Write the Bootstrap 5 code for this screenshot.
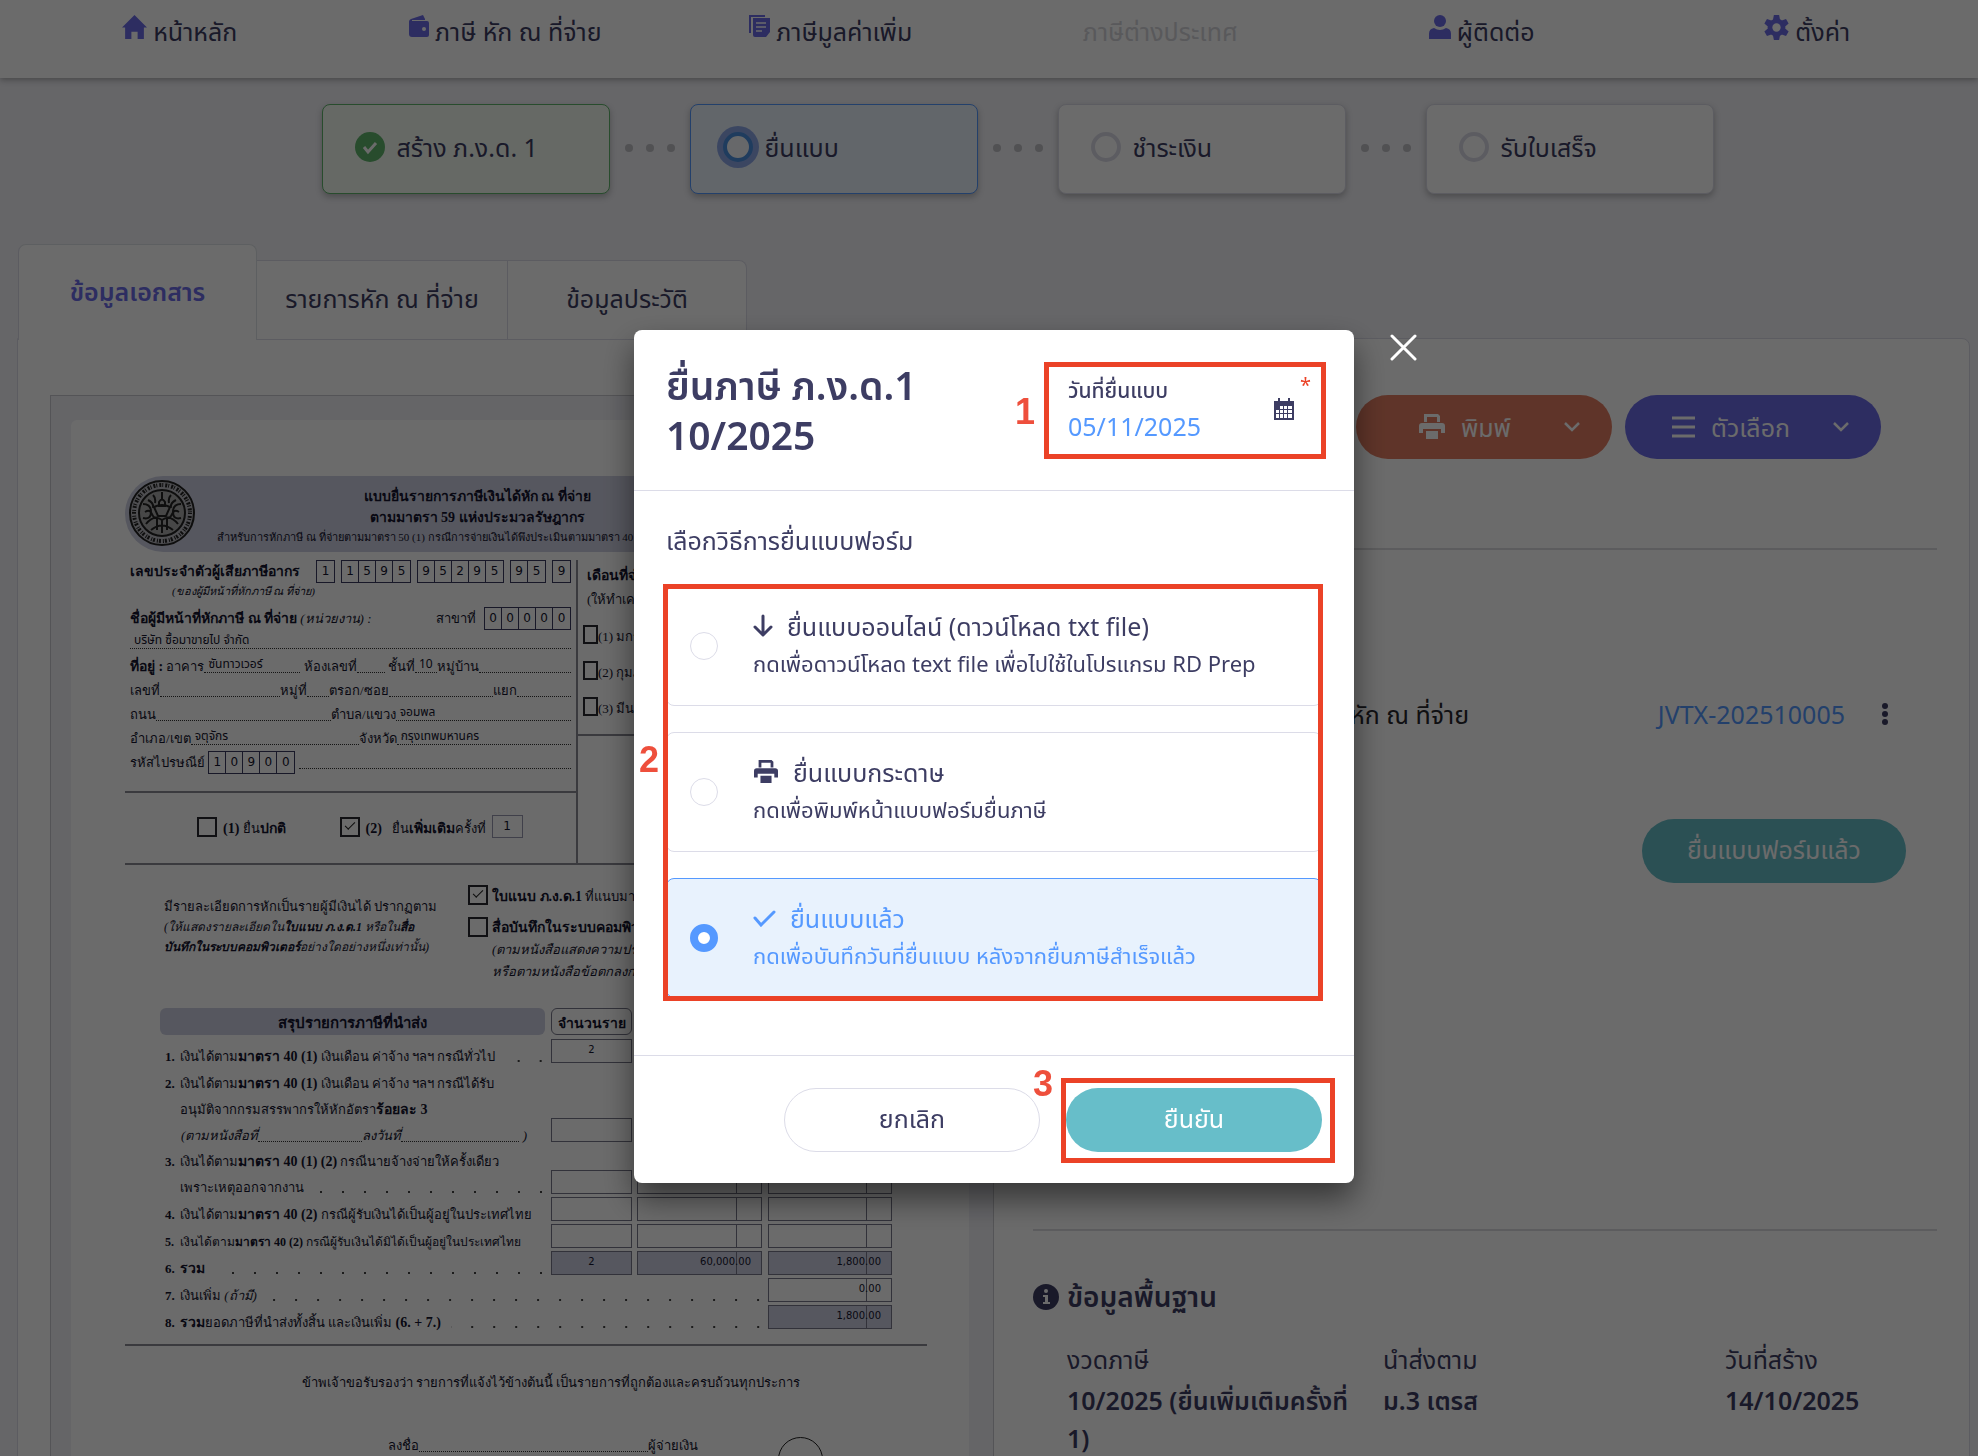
<!DOCTYPE html>
<html lang="th">
<head>
<meta charset="utf-8">
<meta name="viewport" content="width=device-width, initial-scale=1">
<title>ยื่นภาษี ภ.ง.ด.1</title>
<link href="https://cdn.jsdelivr.net/npm/bootstrap@5.3.0/dist/css/bootstrap.min.css" rel="stylesheet">
<style>
  :root { --ink:#3d3d63; --violet:#6b6be8; --blue:#5599ff; --teal:#67bec9; --rule:#dcdce8; --alert:#eb4227; --form-rule:#8a8a95; --form-fill:#ced0e2; }
  body { background:#f2f2f7; color:var(--ink); font-family:"Noto Sans","Noto Sans Thai",sans-serif; font-size:25px; line-height:38px; }
  a { color:inherit; text-decoration:none; }
  svg { display:block; flex:none; }
  .screen { height:100vh; overflow:hidden; }
  .topnav { height:78px; background:#fff; box-shadow:0 2px 6px rgba(0,0,0,.3); padding:12px 8px 0 17px; }
  .topnav .nav-link { padding:0; color:var(--ink); display:flex; justify-content:center; gap:6px; }
  .topnav .nav-link.disabled { color:#d4d4da; padding-left:8px; }
  .topnav svg { color:var(--violet); margin-top:3px; }
  .steps { padding:26px 0 0 57px; height:166px; }
  .step { width:288px; height:90px; padding:0 32px 4px; gap:12px; background:#fff; border:1px solid var(--rule); border-radius:8px; box-shadow:0 3px 6px rgba(0,0,0,.25); }
  .step-done { background:#f3f9f1; border-color:#5fb56b; }
  .step-now { background:#eaf2fd; border-color:var(--blue); }
  .ring { width:30px; height:30px; border:4px solid var(--rule); border-radius:50%; }
  .step-now .ring { border-color:#4a8fe0; box-shadow:0 0 0 6px #8da8e8; background:#f5f8fd; }
  .dots { width:80px; height:88px; gap:13px; }
  .dots i { width:8px; height:8px; border-radius:50%; background:#c0c0c6; }
  .doc-tabs { padding-left:18px; border:0; height:94px; align-items:flex-end; }
  .doc-tabs .nav-link { height:80px; background:#fff; border:1px solid var(--rule); border-left:0; border-radius:0; color:var(--ink); padding:0 0 4px; width:239px; display:flex; align-items:center; justify-content:center; }
  .doc-tabs .mid .nav-link { width:251px; }
  .doc-tabs li:last-child .nav-link { border-top-right-radius:8px; }
  .doc-tabs .nav-link.active { height:96px; border-left:1px solid var(--rule); border-radius:8px 8px 0 0; color:var(--violet); font-weight:600; border-bottom:0; }
  .panel { margin:0 8px 0 17px; background:#fff; border:1px solid var(--rule); border-radius:0 8px 8px 8px; padding:56px 32px 0; }
  .viewer { width:944px; flex:none; background:#f0f0f6; border:1px solid #c9c9cf; padding:24px 24px 0 20px; height:1100px; overflow:hidden; }
  .paper { background:#fff; border-radius:6px; height:1100px; padding:56px 42px 0 54px; color:#14142e; }
  .side { flex:1; padding-left:39px; min-width:0; }
  .pill { height:64px; border-radius:32px; width:256px; border:0; font-size:25px; line-height:38px; display:flex; align-items:center; justify-content:center; color:#fff; padding:0 0 4px; }
  .pill-print { background:#e27d62; } .pill-menu { background:var(--violet); } .pill-done { background:var(--teal); width:264px; }
  .split { justify-content:flex-end; padding:0 31px 0 0; }
  .split svg:last-child { margin-left:52px; }
  .pill-menu svg:last-child { margin-left:42px; }
  .side hr { border:0; border-top:2px solid #dcdcdf; margin:0; opacity:1; }
  .actions { padding-right:56px; gap:13px; height:153px; }
  .journal { height:269px; padding:145px 44px 0 0; color:#26262c; }
  .journal span { width:436px; text-align:right; white-space:nowrap; }
  .journal a { color:var(--blue); }
  .filed { height:410px; padding-right:31px; }
  .info-title { font-weight:600; font-size:28px; padding-top:49px; gap:8px; }
  .facts { padding:26px 0 0 34px; }
  .facts dt { font-weight:400; line-height:38px; }
  .facts dd { font-weight:600; line-height:38px; margin:3px 0 0; }
  .fact-a { width:316px; } .fact-b { width:342px; }
  .fact-a dd { width:308px; }

  .form-doc { font-family:"Liberation Serif",serif; font-size:13px; line-height:24px; white-space:nowrap; }
  .form-doc b { font-size:14px; }
  .band { height:76px; background:var(--form-fill); border-radius:38px 0 0 38px; padding:4px; }
  .band-text { width:520px; margin-left:22px; font-size:11px; line-height:18px; padding-top:6px; }
  .band-text b { line-height:21px; display:block; text-align:center; }
  .digits { display:flex; gap:6px; font:12px/20px "DejaVu Sans",sans-serif; height:23px; }
  .digits span { display:flex; border:1px solid #39395f; }
  .digits i { width:17px; text-align:center; font-style:normal; border-right:1px solid #39395f; }
  .digits i:last-child { border:0; }
  .fill { flex:1; border-bottom:1px dotted #333; height:18px; font:12px/17px "Noto Sans","Noto Sans Thai",sans-serif; padding-left:4px; }
  .w1 { flex:none; width:96px; } .w2 { flex:none; width:28px; } .w3 { flex:none; width:120px; } .w4 { flex:none; width:22px; } .w5 { flex:none; width:104px; }
  .w6 { flex:none; width:175px; } .w7 { flex:none; width:168px; }
  .ln { display:flex; height:24px; }
  .left-col { width:453px; border-right:2px solid var(--form-rule); height:303px; flex:none; }
  .fields { padding:0 5px; height:231px; }
  .tax-it { line-height:14px; height:23px; font-size:11px; padding-left:42px; }
  .kind { border-top:2px solid var(--form-rule); height:72px; padding:24px 0 0 72px; gap:6px; }
  .right-col { flex:1; height:176px; border-bottom:2px solid var(--form-rule); padding:4px 5px 0; }
  .right-head { padding-left:4px; }
  .months { margin-top:13px; gap:12px; }
  .tick { appearance:none; width:20px; height:20px; border:2px solid #26262e; margin:0; flex:none; background:#fff; position:relative; border-radius:0; }
  .tick:checked::after { content:""; position:absolute; left:3px; top:3px; width:10px; height:5px; border-left:1px solid #222; border-bottom:1px solid #222; transform:rotate(-45deg); }
  .tick-s { width:15px; height:19px; }
  .round-no { width:31px; height:23px; border:1px solid #9a9ab0; font:12px/20px "DejaVu Sans",sans-serif; text-align:center; margin-top:-2px; }
  .attach { border-top:2px solid var(--form-rule); padding:20px 0 0 39px; height:145px; }
  .attach-note { width:304px; line-height:20px; padding-top:12px; }
  .attach-note em, .attach-note em b { font-size:12px; }
  .attach-how div + div { line-height:22px; }
  .sum { margin:0 0 0 35px; border-collapse:collapse; table-layout:fixed; width:738px; }
  .sum th, .sum td { padding:0; vertical-align:bottom; line-height:24px; }
  .cap-main { background:var(--form-fill); border-radius:6px; height:27px; line-height:31px; text-align:center; margin-right:6px; font-size:15px; }
  .cap-box { border:1px solid #77778a; border-radius:6px; height:27px; line-height:29px; text-align:center; margin-right:5px; font-size:14px; }
  .sum tbody td { height:27px; }
  .sum .t2 td { height:79px; } .sum .t3 td { height:52px; } .sum .t1 td { height:28px; }
  .cellbox { height:24px; border:1px solid #77778a; font:10px/20px "DejaVu Sans",sans-serif; text-align:right; padding-right:10px; margin-right:6px; background:linear-gradient(#77778a,#77778a) right 24px top/1px 100% no-repeat; }
  .cellbox.qty { text-align:center; padding:0; margin-right:5px; background-image:none; }
  .cellbox.total { background-color:var(--form-fill); }
  .row-label { display:flex; padding-left:5px; margin-bottom:-6px; }
  .row-label span.in { padding-left:15px; }
  .narrow, .narrow b { font-size:12px; }
  .dotfill { flex:1; margin:0 6px 0 10px; background:radial-gradient(circle at 18px 16px,#444 0,#444 1px,transparent 1px) right 0 top/22px 24px repeat-x; height:24px; }
  .no { width:15px; flex:none; font-weight:700; }
  .certify { border-top:2px solid var(--form-rule); margin-top:15px; padding:25px 0 0 50px; text-align:center; }
  .sign { margin:39px 0 0 263px; height:24px; align-items:flex-start; }
  .stamp { width:45px; height:45px; border:1px solid #222; border-radius:50%; margin:3px 0 0 80px; flex:none; }

  .modal { padding-left:10px; }
  .modal-backdrop.show { opacity:.58; }
  .modal-dialog { max-width:720px; margin-top:330px; }
  .modal-content { border:0; border-radius:8px; box-shadow:0 16px 32px rgba(0,0,0,.5); color:var(--ink); }
  .modal-header { padding:30px 32px 0; height:161px; border-color:var(--rule); align-items:flex-start; }
  .modal-title { font-size:39px; line-height:50px; font-weight:600; }
  .datefield { width:256px; padding:12px 14px 0 2px; position:relative; }
  .datefield label { font-size:21px; line-height:36px; font-weight:500; display:block; }
  .datefield input { border:0; padding:0; width:180px; color:var(--blue); font-size:25px; line-height:36px; height:36px; display:block; background:none; }
  .calbtn { position:absolute; right:28px; top:38px; border:0; background:none; padding:0; color:var(--ink); }
  .star { position:absolute; right:11px; top:10px; color:var(--alert); font-size:20px; line-height:30px; }
  .frame { position:absolute; border:5px solid var(--alert); pointer-events:none; }
  .mark-no { position:absolute; color:#ee4f3c; font:700 36px/36px "Liberation Sans",sans-serif; }
  .modal-body { padding:30px 32px 0; height:564px; flex:none; }
  .choices { gap:26px; margin-top:27px; position:relative; }
  .choice { height:120px; border:1px solid var(--rule); border-radius:8px; padding:20px 25px 0 23px; cursor:pointer; }
  .choice input { appearance:none; width:28px; height:28px; border:1px solid var(--rule); border-radius:50%; margin:25px 35px 0 0; flex:none; background:#fff; }
  .choice input:checked { border:8px solid var(--blue); }
  .choice-name { gap:14px; }
  .choice small { font-size:22px; line-height:36px; display:block; }
  .choice.on { background:#e8f2fd; border-color:var(--blue); color:var(--blue); }
  .modal-footer { padding:32px 32px 31px; border-color:var(--rule); gap:26px; position:relative; }
  .modal-footer > * { margin:0; }
  .cancel { background:#fff; border:1px solid var(--rule); color:var(--ink); }
  .confirm { background:var(--teal); }
  .xbtn { position:absolute; right:-63px; top:4px; border:0; background:none; padding:0; }
</style>
<script src="https://cdn.jsdelivr.net/npm/bootstrap@5.3.0/dist/js/bootstrap.bundle.min.js"></script>
</head>
<body class="modal-open overflow-hidden">
<svg width="0" height="0" class="position-absolute">
  <symbol id="printer" viewBox="0 0 26 26"><path fill="currentColor" d="M5 0h14l2 2v6h-3V3H8v5H5zM3 9h20a3 3 0 0 1 3 3v7h-4v-4H4v4H0v-7a3 3 0 0 1 3-3zM7 17h12v8H7z"/></symbol>
</svg>
<div class="screen">
  <nav class="topnav">
    <ul class="nav nav-justified flex-nowrap">
      <li class="nav-item"><a class="nav-link" href="#"><svg width="25" height="25" viewBox="0 0 24 24" fill="currentColor"><path d="M12 0 0 12h3v11h6v-7h6v7h6V12h3z"/></svg>หน้าหลัก</a></li>
      <li class="nav-item"><a class="nav-link" href="#"><svg width="20" height="22" viewBox="0 0 20 22" fill="currentColor"><path d="M2 4 14 0l2 4v1H3v1h15a2 2 0 0 1 2 2v12a2 2 0 0 1-2 2H3a3 3 0 0 1-3-3V7a3 3 0 0 1 2-3zm13 8a2 2 0 1 0 0 4 2 2 0 0 0 0-4z"/></svg>ภาษี หัก ณ ที่จ่าย</a></li>
      <li class="nav-item"><a class="nav-link" href="#"><svg width="21" height="24" viewBox="0 0 21 24"><path d="M1 18V1h15" fill="none" stroke="currentColor" stroke-width="2"/><path d="M4 3h17v14l-4 5H6a2 2 0 0 1-2-2z" fill="currentColor"/><path d="M7 8h10M7 12h10M7 16h6" stroke="#fff" stroke-width="1.6"/></svg>ภาษีมูลค่าเพิ่ม</a></li>
      <li class="nav-item"><a class="nav-link disabled" aria-disabled="true">ภาษีต่างประเทศ</a></li>
      <li class="nav-item"><a class="nav-link" href="#"><svg width="22" height="25" viewBox="0 0 22 25" fill="currentColor"><circle cx="11" cy="6" r="6"/><path d="M0 24v-5a6 6 0 0 1 5-6q6 4 12 0a6 6 0 0 1 5 6v5z"/></svg>ผู้ติดต่อ</a></li>
      <li class="nav-item"><a class="nav-link" href="#"><svg width="25" height="25" viewBox="0 0 24 24"><g fill="currentColor"><circle cx="12" cy="12" r="8.5"/><path id="teeth" d="M9.500 0h5l1 5h-7zM9.500 24h5l1-5h-7z"/><use href="#teeth" transform="rotate(60 12 12)"/><use href="#teeth" transform="rotate(120 12 12)"/></g><circle cx="12" cy="12" r="4" fill="#fff"/></svg>ตั้งค่า</a></li>
    </ul>
  </nav>

  <div class="steps d-flex justify-content-center align-items-start">
    <div class="step step-done d-flex align-items-center"><svg width="30" height="30" viewBox="0 0 30 30"><circle cx="15" cy="15" r="15" fill="#5fb56b"/><path d="m9 15 4 5 8-9" fill="none" stroke="#fff" stroke-width="3"/></svg>สร้าง ภ.ง.ด. 1</div>
    <div class="dots d-flex justify-content-center align-items-center"><i></i><i></i><i></i></div>
    <div class="step step-now d-flex align-items-center"><span class="ring"></span>ยื่นแบบ</div>
    <div class="dots d-flex justify-content-center align-items-center"><i></i><i></i><i></i></div>
    <div class="step d-flex align-items-center"><span class="ring"></span>ชำระเงิน</div>
    <div class="dots d-flex justify-content-center align-items-center"><i></i><i></i><i></i></div>
    <div class="step d-flex align-items-center"><span class="ring"></span>รับใบเสร็จ</div>
  </div>

  <ul class="nav nav-tabs doc-tabs">
    <li class="nav-item"><a class="nav-link active" href="#">ข้อมูลเอกสาร</a></li>
    <li class="nav-item mid"><a class="nav-link" href="#">รายการหัก ณ ที่จ่าย</a></li>
    <li class="nav-item"><a class="nav-link" href="#">ข้อมูลประวัติ</a></li>
  </ul>

  <main class="panel d-flex">
    <section class="viewer">
      <div class="paper"><div class="form-doc">
        <div class="band d-flex">
          <svg width="66" height="66" viewBox="0 0 66 66" fill="none" stroke="#222"><circle cx="33" cy="33" r="32" fill="#bbbbc2" stroke-width="2"/><circle cx="33" cy="33" r="28" stroke-width="4" stroke-dasharray="1 2 2 1"/><circle cx="33" cy="33" r="23" fill="#aaa" stroke-width="2"/><path d="M33 12v8M30 22q3-5 6 0v4h-6zM25 27q8-4 16 0l-4 9h-8zM14 24q8 0 8 8t-8 6M52 24q-8 0-8 8t8 6M16 32q5-3 7 2t5 3M50 32q-5-3-7 2t-5 3M17 44q8-10 16-4 8-6 16 4M22 50q11-9 22 0M28 38v12M38 38v12M33 40v13M19 20q6 3 5 8M47 20q-6 3-5 8M24 15q3 3 2 8M42 15q-3 3-2 8" stroke-width="2"/></svg>
          <div class="band-text"><b>แบบยื่นรายการภาษีเงินได้หัก ณ ที่จ่าย</b><b>ตามมาตรา 59 แห่งประมวลรัษฎากร</b>สำหรับการหักภาษี ณ ที่จ่ายตามมาตรา 50 (1) กรณีการจ่ายเงินได้พึงประเมินตามมาตรา 40 (1) (2)</div>
        </div>
        <div class="d-flex pt-2">
          <div class="left-col">
            <div class="fields">
              <div class="ln justify-content-between"><b>เลขประจำตัวผู้เสียภาษีอากร</b><div class="digits"><span><i>1</i></span><span><i>1</i><i>5</i><i>9</i><i>5</i></span><span><i>9</i><i>5</i><i>2</i><i>9</i><i>5</i></span><span><i>9</i><i>5</i></span><span><i>9</i></span></div></div>
              <div class="tax-it"><em>(ของผู้มีหน้าที่หักภาษี ณ ที่จ่าย)</em></div>
              <div class="ln"><b>ชื่อผู้มีหน้าที่หักภาษี ณ ที่จ่าย</b>&nbsp;<em>(หน่วยงาน) :</em><span class="ms-auto me-2">สาขาที่</span><div class="digits"><span><i>0</i><i>0</i><i>0</i><i>0</i><i>0</i></span></div></div>
              <div class="ln"><span class="fill">บริษัท ซื้อมาขายไป จำกัด</span></div>
              <div class="ln"><b>ที่อยู่ :</b>&nbsp;อาคาร<span class="fill w1">ซันทาวเวอร์</span>&nbsp;ห้องเลขที่<span class="fill w2"></span>&nbsp;ชั้นที่<span class="fill w4">10</span>หมู่บ้าน<span class="fill"></span></div>
              <div class="ln">เลขที่<span class="fill w3"></span>หมู่ที่<span class="fill w4"></span>ตรอก/ซอย<span class="fill w5"></span>แยก<span class="fill"></span></div>
              <div class="ln">ถนน<span class="fill w6"></span>ตำบล/แขวง<span class="fill">จอมพล</span></div>
              <div class="ln">อำเภอ/เขต<span class="fill w7">จตุจักร</span>จังหวัด<span class="fill">กรุงเทพมหานคร</span></div>
              <div class="ln">รหัสไปรษณีย์&nbsp;<div class="digits"><span><i>1</i><i>0</i><i>9</i><i>0</i><i>0</i></span></div>&nbsp;<span class="fill"></span></div>
            </div>
            <div class="kind d-flex">
              <input class="tick" type="checkbox" id="k1"><label for="k1"><b>(1)</b> ยื่น<b>ปกติ</b></label>
              <input class="tick ms-5" type="checkbox" id="k2" checked><label for="k2"><b>(2)</b> &nbsp; ยื่น<b>เพิ่มเติม</b>ครั้งที่</label>
              <span class="round-no">1</span>
            </div>
          </div>
          <div class="right-col">
            <div class="right-head"><b>เดือนที่จ่ายเงินได้พึงประเมิน</b><div>(ให้ทำเครื่องหมาย)</div></div>
            <div class="months d-flex flex-column">
              <div class="d-flex"><input class="tick tick-s" type="checkbox" id="m1"><label for="m1">(1) มกราคม</label></div>
              <div class="d-flex"><input class="tick tick-s" type="checkbox" id="m2"><label for="m2">(2) กุมภาพันธ์</label></div>
              <div class="d-flex"><input class="tick tick-s" type="checkbox" id="m3"><label for="m3">(3) มีนาคม</label></div>
            </div>
          </div>
        </div>
        <div class="attach d-flex">
          <div class="attach-note">มีรายละเอียดการหักเป็นรายผู้มีเงินได้ ปรากฏตาม<br><em>(ให้แสดงรายละเอียดใน<b>ใบแนบ ภ.ง.ด.1</b> หรือใน<b>สื่อ</b><br><b>บันทึกในระบบคอมพิวเตอร์</b>อย่างใดอย่างหนึ่งเท่านั้น)</em></div>
          <div class="attach-how">
            <div class="d-flex gap-1 mb-2"><input class="tick" type="checkbox" id="a1" checked><label for="a1"><b>ใบแนบ ภ.ง.ด.1</b> ที่แนบมาพร้อมนี้</label></div>
            <div class="d-flex gap-1"><input class="tick" type="checkbox" id="a2"><label for="a2"><b>สื่อบันทึกในระบบคอมพิวเตอร์</b></label></div>
            <div class="ps-4"><em>(ตามหนังสือแสดงความประสงค์ฯ</em></div><div class="ps-4"><em>หรือตามหนังสือข้อตกลงการใช้งานฯ</em></div>
          </div>
        </div>
        <table class="sum">
          <colgroup><col style="width:391px"><col style="width:86px"><col style="width:131px"><col style="width:130px"></colgroup>
          <thead><tr><th><div class="cap-main">สรุปรายการภาษีที่นำส่ง</div></th><th><div class="cap-box">จำนวนราย</div></th><th><div class="cap-box">เงินได้ทั้งสิ้น</div></th><th><div class="cap-box">ภาษีที่นำส่งทั้งสิ้น</div></th></tr></thead>
          <tbody>
            <tr class="t1"><td><div class="row-label"><span class="no">1.</span>เงินได้ตาม<b>มาตรา 40 (1)</b>&nbsp;เงินเดือน ค่าจ้าง ฯลฯ กรณีทั่วไป<span class="dotfill"></span></div></td><td><div class="cellbox qty">2</div></td><td><div class="cellbox">60,000.00</div></td><td><div class="cellbox">1,800.00</div></td></tr>
            <tr class="t2"><td><div class="row-label"><span class="no">2.</span>เงินได้ตาม<b>มาตรา 40 (1)</b>&nbsp;เงินเดือน ค่าจ้าง ฯลฯ กรณีได้รับ</div><div class="row-label pt-1 mt-1"><span class="in">อนุมัติจากกรมสรรพากรให้หักอัตรา<b>ร้อยละ 3</b></span></div><div class="row-label pt-1 mt-1"><em class="ps-3">(ตามหนังสือที่</em><span class="fill w5"></span><em>ลงวันที่</em><span class="fill me-1"></span><em class="me-4">)</em></div></td><td><div class="cellbox qty"></div></td><td><div class="cellbox"></div></td><td><div class="cellbox"></div></td></tr>
            <tr class="t3"><td><div class="row-label"><span class="no">3.</span>เงินได้ตาม<b>มาตรา 40 (1) (2)</b>&nbsp;กรณีนายจ้างจ่ายให้ครั้งเดียว</div><div class="row-label pt-1 mt-1"><span class="in">เพราะเหตุออกจากงาน</span><span class="dotfill"></span></div></td><td><div class="cellbox qty"></div></td><td><div class="cellbox"></div></td><td><div class="cellbox"></div></td></tr>
            <tr><td><div class="row-label"><span class="no">4.</span>เงินได้ตาม<b>มาตรา 40 (2)</b>&nbsp;กรณีผู้รับเงินได้เป็นผู้อยู่ในประเทศไทย</div></td><td><div class="cellbox qty"></div></td><td><div class="cellbox"></div></td><td><div class="cellbox"></div></td></tr>
            <tr><td><div class="row-label narrow"><span class="no">5.</span>เงินได้ตาม<b>มาตรา 40 (2)</b>&nbsp;กรณีผู้รับเงินได้มิได้เป็นผู้อยู่ในประเทศไทย</div></td><td><div class="cellbox qty"></div></td><td><div class="cellbox"></div></td><td><div class="cellbox"></div></td></tr>
            <tr><td><div class="row-label"><span class="no">6.</span><b>รวม</b><span class="dotfill"></span></div></td><td><div class="cellbox qty total">2</div></td><td><div class="cellbox total">60,000.00</div></td><td><div class="cellbox total">1,800.00</div></td></tr>
            <tr><td colspan="3"><div class="row-label"><span class="no">7.</span>เงินเพิ่ม&nbsp;<em>(ถ้ามี)</em><span class="dotfill"></span></div></td><td><div class="cellbox">0.00</div></td></tr>
            <tr><td colspan="3"><div class="row-label"><span class="no">8.</span><b>รวม</b>ยอดภาษีที่นำส่งทั้งสิ้น และเงินเพิ่ม&nbsp;<b>(6. + 7.)</b><span class="dotfill"></span></div></td><td><div class="cellbox total">1,800.00</div></td></tr>
          </tbody>
        </table>
        <div class="certify">ข้าพเจ้าขอรับรองว่า รายการที่แจ้งไว้ข้างต้นนี้ เป็นรายการที่ถูกต้องและครบถ้วนทุกประการ</div>
        <div class="sign d-flex"><span>ลงชื่อ</span><span class="fill"></span><span>ผู้จ่ายเงิน</span><span class="stamp"></span><span class="w5"></span></div>
      </div></div>
    </section>

    <section class="side">
      <div class="actions d-flex justify-content-end">
        <button type="button" class="pill pill-print split"><svg width="26" height="26" class="me-3"><use href="#printer"/></svg>พิมพ์<svg width="18" height="12" viewBox="0 0 18 12"><path d="m2 2 7 7 7-7" fill="none" stroke="#fff" stroke-width="2.500"/></svg></button>
        <button type="button" class="pill pill-menu split"><svg width="23" height="22" viewBox="0 0 23 22" class="me-3"><path d="M0 2h23M0 11h23M0 20h23" stroke="#fff" stroke-width="3"/></svg>ตัวเลือก<svg width="18" height="12" viewBox="0 0 18 12"><path d="m2 2 7 7 7-7" fill="none" stroke="#fff" stroke-width="2.500"/></svg></button>
      </div>
      <hr>
      <div class="journal d-flex align-items-start">
        <span>บันทึกรายการยื่นแบบภาษีหัก ณ ที่จ่าย</span>
        <a href="#" class="ms-auto me-4">JVTX-202510005</a>
        <svg width="16" height="22" viewBox="0 0 16 22" fill="#3d3d63" class="ms-2 mt-2"><circle cx="8" cy="3" r="3"/><circle cx="8" cy="11" r="3"/><circle cx="8" cy="19" r="3"/></svg>
      </div>
      <div class="filed d-flex justify-content-end"><button type="button" class="pill pill-done">ยื่นแบบฟอร์มแล้ว</button></div>
      <hr>
      <h2 class="info-title d-flex align-items-center mb-0"><svg width="26" height="26" viewBox="0 0 26 26"><circle cx="13" cy="13" r="13" fill="#3d3d63"/><circle cx="13" cy="7" r="2" fill="#fff"/><path d="M10 11h5v7h2v2h-7v-2h2v-5h-2z" fill="#fff"/></svg>ข้อมูลพื้นฐาน</h2>
      <div class="facts d-flex">
        <dl class="fact-a"><dt>งวดภาษี</dt><dd>10/2025 (ยื่นเพิ่มเติมครั้งที่ 1)</dd></dl>
        <dl class="fact-b"><dt>นำส่งตาม</dt><dd>ม.3 เตรส</dd></dl>
        <dl><dt>วันที่สร้าง</dt><dd>14/10/2025</dd></dl>
      </div>
    </section>
  </main>
</div>

<div class="modal-backdrop show"></div>
<div class="modal show d-block" tabindex="-1" role="dialog" aria-labelledby="fileTitle">
  <div class="modal-dialog">
    <form class="modal-content">
      <button type="button" class="xbtn" aria-label="ปิด"><svg width="27" height="27" viewBox="0 0 27 27"><path d="m2 2 23 23M25 2 2 25" stroke="#fff" stroke-width="3" stroke-linecap="round"/></svg></button>
      <div class="modal-header">
        <h1 class="modal-title" id="fileTitle">ยื่นภาษี ภ.ง.ด.1<br>10/2025</h1>
        <div class="datefield">
          <label for="fileDate">วันที่ยื่นแบบ</label>
          <input type="text" id="fileDate" value="05/11/2025">
          <button type="button" class="calbtn" aria-label="ปฏิทิน"><svg width="20" height="22" viewBox="0 0 20 22"><path d="M0 3h20v19H0zM4 0h2v3H4zM14 0h2v3h-2z" fill="currentColor"/><path d="M6 8h3v3H6zM10 8h3v3h-3zM14 8h4v3h-4zM2 12h3v3H2zM6 12h3v3H6zM10 12h3v3h-3zM14 12h4v3h-4zM2 16h3v4H2zM6 16h3v4H6zM10 16h3v4h-3zM14 16h4v4h-4z" fill="#fff"/></svg></button>
          <span class="star">*</span>
          <span class="frame" style="left:-22px;right:-4px;top:2px;height:97px"></span>
          <span class="mark-no" style="left:-51px;top:34px">1</span>
        </div>
      </div>
      <div class="modal-body">
        <div>เลือกวิธีการยื่นแบบฟอร์ม</div>
        <div class="choices d-flex flex-column">
          <label class="choice d-flex"><input type="radio" name="how"><span><span class="choice-name d-flex align-items-center"><svg width="20" height="24" viewBox="0 0 20 24"><path d="M10 2v18M2 13l8 8 8-8" fill="none" stroke="currentColor" stroke-width="3" stroke-linecap="round" stroke-linejoin="round"/></svg>ยื่นแบบออนไลน์ (ดาวน์โหลด txt file)</span><small>กดเพื่อดาวน์โหลด text file เพื่อไปใช้ในโปรแกรม RD Prep</small></span></label>
          <label class="choice d-flex"><input type="radio" name="how"><span><span class="choice-name d-flex align-items-center"><svg width="26" height="24"><use href="#printer"/></svg>ยื่นแบบกระดาษ</span><small>กดเพื่อพิมพ์หน้าแบบฟอร์มยื่นภาษี</small></span></label>
          <label class="choice on d-flex"><input type="radio" name="how" checked><span><span class="choice-name d-flex align-items-center"><svg width="23" height="17" viewBox="0 0 23 17"><path d="m2 8 6 7L21 2" fill="none" stroke="currentColor" stroke-width="3" stroke-linecap="round"/></svg>ยื่นแบบแล้ว</span><small>กดเพื่อบันทึกวันที่ยื่นแบบ หลังจากยื่นภาษีสำเร็จแล้ว</small></span></label>
          <span class="frame" style="left:-3px;right:-1px;top:-2px;bottom:-3px"></span>
          <span class="mark-no" style="left:-27px;top:156px">2</span>
        </div>
      </div>
      <div class="modal-footer">
        <button type="button" class="pill cancel">ยกเลิก</button>
        <button type="submit" class="pill confirm">ยืนยัน</button>
        <span class="frame" style="right:19px;top:22px;width:274px;height:85px"></span>
        <span class="mark-no" style="right:301px;top:10px">3</span>
      </div>
    </form>
  </div>
</div>
</body>
</html>
